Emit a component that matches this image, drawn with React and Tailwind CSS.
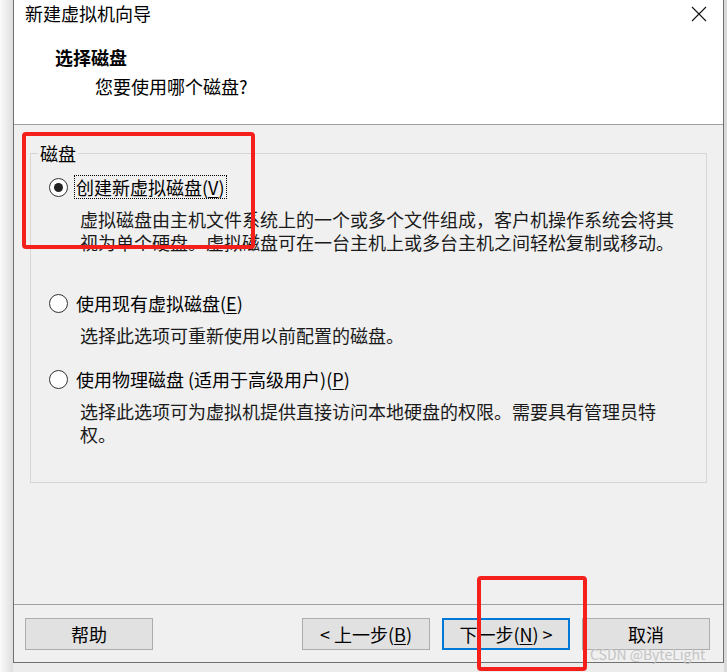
import React from 'react';

const font = { fontFamily: '"Noto Sans CJK SC", "Noto Sans", sans-serif' };

function Mn({ children }) {
  return <span className="underline underline-offset-2">{children}</span>;
}

function Radio({ checked }) {
  return (
    <span className="flex h-[19px] w-[19px] shrink-0 items-center justify-center rounded-full border border-[#333] bg-white">
      {checked && <span className="h-[9px] w-[9px] rounded-full bg-[#222]" />}
    </span>
  );
}

function Option({ checked, label, focus, className, children }) {
  return (
    <div className={'flex flex-col ' + (className || '')}>
      <div className="flex items-center gap-[6px] pl-[18px]">
        <Radio checked={checked} />
        <span
          className={
            'leading-[22px] ' +
            (focus ? 'border border-dotted border-black px-[1px]' : 'border border-transparent px-[1px]')
          }
        >
          {label}
        </span>
      </div>
      <p className="mt-[9px] pl-[49px] pr-[30px] leading-[23px] text-[#1a1a1a]">{children}</p>
    </div>
  );
}

function Btn({ children, primary }) {
  return (
    <button
      className={
        'flex h-[32px] w-[128px] items-center justify-center bg-[#e1e1e1] text-[18px] text-black ' +
        (primary ? 'border-2 border-[#0078d7]' : 'border border-[#adadad]')
      }
    >
      {children}
    </button>
  );
}

export default function App() {
  return (
    <div className="relative flex h-[672px] w-[727px] overflow-hidden bg-[#ececec] text-[18px] text-black" style={font}>
      <div className="w-[13px] shrink-0 bg-gradient-to-r from-[#fbfbfb] to-[#dedede]" />
      <div className="flex h-[663px] w-[711px] shrink-0 flex-col border-x border-b border-[#707070]">
        {/* header */}
        <div className="flex h-[125px] shrink-0 flex-col border-b border-[#a0a0a0] bg-white">
          <div className="flex items-start justify-between pl-[11px] pr-[16px] pt-[1px]">
            <span className="leading-[24px]">新建虚拟机向导</span>
            <svg width="16" height="16" viewBox="0 0 16 16" className="mt-[5px]">
              <path d="M1 1L15 15M15 1L1 15" stroke="#111" strokeWidth="1.1" fill="none" />
            </svg>
          </div>
          <div className="pl-[41px] pt-[20px] font-bold leading-[24px]">选择磁盘</div>
          <div className="pl-[81px] pt-[5px] leading-[24px]">您要使用哪个磁盘?</div>
        </div>
        {/* body */}
        <div className="flex flex-1 flex-col bg-[#f0f0f0] px-[16px] pt-[28px]">
          <div className="relative h-[330px] border border-[#d5d5d5]">
            <span className="absolute -top-[13px] left-[7px] bg-[#f0f0f0] px-[2px] leading-[24px]">磁盘</span>
            <div className="flex flex-col pt-[21px]">
              <Option checked focus label={<>创建新虚拟磁盘(<Mn>V</Mn>)</>}>
                虚拟磁盘由主机文件系统上的一个或多个文件组成，客户机操作系统会将其视为单个硬盘。虚拟磁盘可在一台主机上或多台主机之间轻松复制或移动。
              </Option>
              <Option className="mt-[37px]" label={<>使用现有虚拟磁盘(<Mn>E</Mn>)</>}>
                选择此选项可重新使用以前配置的磁盘。
              </Option>
              <Option className="mt-[20px]" label={<>使用物理磁盘 (适用于高级用户)(<Mn>P</Mn>)</>}>
                选择此选项可为虚拟机提供直接访问本地硬盘的权限。需要具有管理员特权。
              </Option>
            </div>
          </div>
        </div>
        {/* footer */}
        <div className="flex h-[58px] shrink-0 items-start border-t border-[#a0a0a0] bg-[#f0f0f0] pl-[11px] pr-[13px] pt-[13px]">
          <Btn>帮助</Btn>
          <div className="flex-1" />
          <div className="flex gap-[12px]">
            <Btn>&lt; 上一步(<Mn>B</Mn>)</Btn>
            <Btn primary>下一步(<Mn>N</Mn>) &gt;</Btn>
            <Btn>取消</Btn>
          </div>
        </div>
      </div>
      <div className="flex-1 bg-[#d9d9d9]" />

      {/* screenshot annotations */}
      <div className="absolute left-[22px] top-[132px] h-[117px] w-[233px] rounded-[4px] border-4 border-[#f5201c]" />
      <div className="absolute left-[477px] top-[576px] h-[95px] w-[110px] rounded-[4px] border-4 border-[#f5201c]" />
      <span className="absolute left-[590px] top-[645px] text-[14px] leading-[18px] text-[#c4c4c4]">CSDN @ByteLight</span>
    </div>
  );
}
